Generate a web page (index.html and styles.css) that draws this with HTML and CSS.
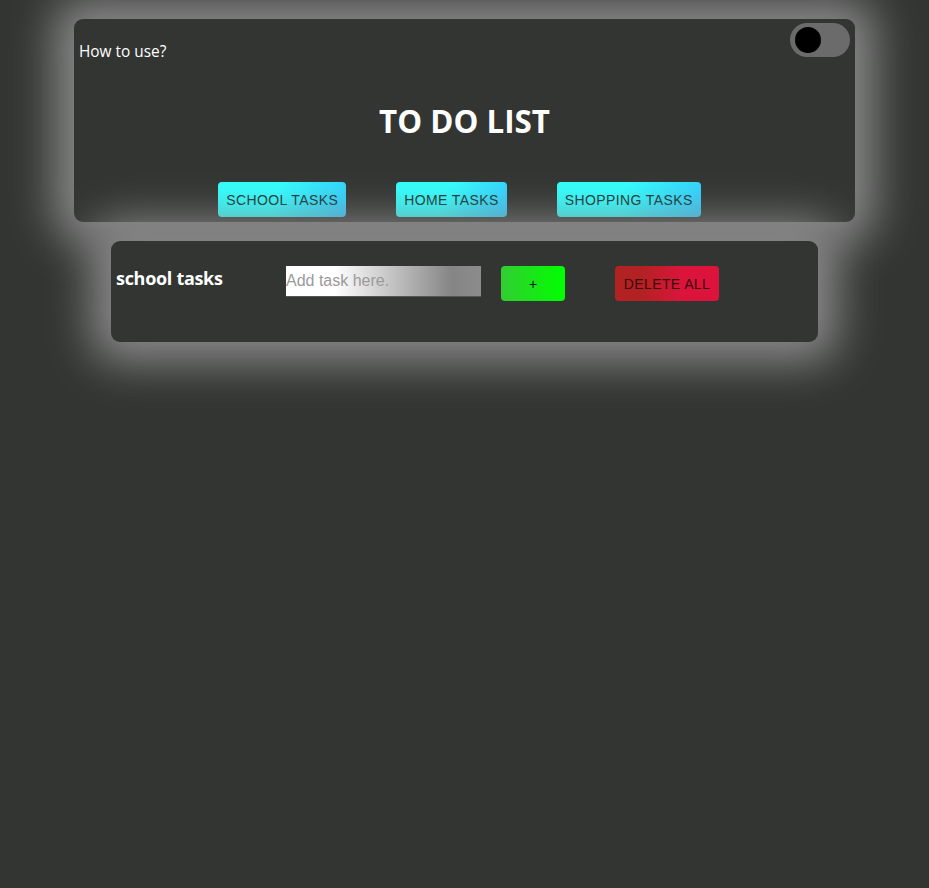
FILE: index.html
```html
<!DOCTYPE html>
<html>
<head>
<meta charset="utf-8">
<link rel="stylesheet" href="styles.css">
</head>
<body>
<div class="page">
  <header class="card head">
    <div class="top">
      <span class="howto">How to use?</span>
      <span class="toggle"><span class="knob"></span></span>
    </div>
    <h1 class="title">TO DO LIST</h1>
    <nav class="tabs">
      <button class="tab">SCHOOL TASKS</button>
      <button class="tab">HOME TASKS</button>
      <button class="tab">SHOPPING TASKS</button>
    </nav>
  </header>
  <section class="card list">
    <h2 class="list-name">school tasks</h2>
    <input class="task-input" type="text" placeholder="Add task here.">
    <button class="add">+</button>
    <button class="del">DELETE ALL</button>
  </section>
</div>
</body>
</html>
```
FILE: styles.css
```css
html, body {
  margin: 0;
  padding: 0;
  background: #323532;
  height: 100%;
}
body {
  font-family: "Open Sans", "Noto Sans", sans-serif;
  color: #fff;
}
.page {
  display: flex;
  flex-direction: column;
  align-items: center;
  padding-top: 19px;
}
.card {
  background: #323532;
  border-radius: 9px;
  box-shadow: 0 0 45px 20px #8a8a8a;
  box-sizing: border-box;
}
.head {
  width: 781px;
  height: 203px;
  padding: 4px 5px 0 5px;
  display: flex;
  flex-direction: column;
}
.top {
  display: flex;
  justify-content: space-between;
  align-items: flex-start;
  height: 34px;
}
.howto {
  font-size: 15.4px;
  margin-top: 19px;
  line-height: 20px;
}
.toggle {
  width: 60px;
  height: 34px;
  border-radius: 17px;
  background: #6b6b6b;
  display: flex;
  align-items: center;
  padding-left: 5px;
  box-sizing: border-box;
}
.knob {
  width: 26px;
  height: 26px;
  border-radius: 50%;
  background: #000;
}
.title {
  margin: 44px 0 0 0;
  text-align: center;
  font-size: 31.3px;
  font-weight: 700;
  line-height: 40px;
}
.tabs {
  display: flex;
  justify-content: center;
  gap: 50px;
  margin-top: 41px;
  padding-right: 10px;
}
.tab {
  height: 35px;
  padding: 0 8px;
  border: none;
  border-radius: 4px;
  background: linear-gradient(115deg, #33ffff 45%, #33ccff 100%);
  font-family: "Liberation Sans", Arial, sans-serif;
  font-size: 14px;
  letter-spacing: 0.4px;
  color: #163434;
}
.list {
  width: 707px;
  height: 101px;
  margin-top: 19px;
  display: flex;
  align-items: flex-start;
  padding: 25px 5px 0 5px;
}
.list-name {
  margin: 0;
  width: 170px;
  font-size: 18px;
  font-weight: 700;
  line-height: 24px;
  letter-spacing: -0.3px;
}
.task-input {
  width: 195px;
  height: 31px;
  box-sizing: border-box;
  border: none;
  border-bottom: 1px solid #555;
  padding: 0;
  background: linear-gradient(to right, #fff 25%, #858585 85%, #8c8c8c);
  font-family: "Liberation Sans", Arial, sans-serif;
  font-size: 16px;
  outline: none;
}
.task-input::placeholder {
  color: #9a9a9a;
}
.add {
  margin-left: 20px;
  width: 64px;
  height: 35px;
  border: none;
  border-radius: 4px;
  background: linear-gradient(to right, #32cd32, #00ff00);
  font-family: "Liberation Sans", Arial, sans-serif;
  font-size: 14px;
  color: #111;
}
.del {
  margin-left: 50px;
  width: 104px;
  height: 35px;
  border: none;
  border-radius: 4px;
  background: linear-gradient(to right, #b22222 25%, #dc143c 65%);
  font-family: "Liberation Sans", Arial, sans-serif;
  font-size: 14px;
  letter-spacing: 0.4px;
  color: #3a0a0a;
}
```
